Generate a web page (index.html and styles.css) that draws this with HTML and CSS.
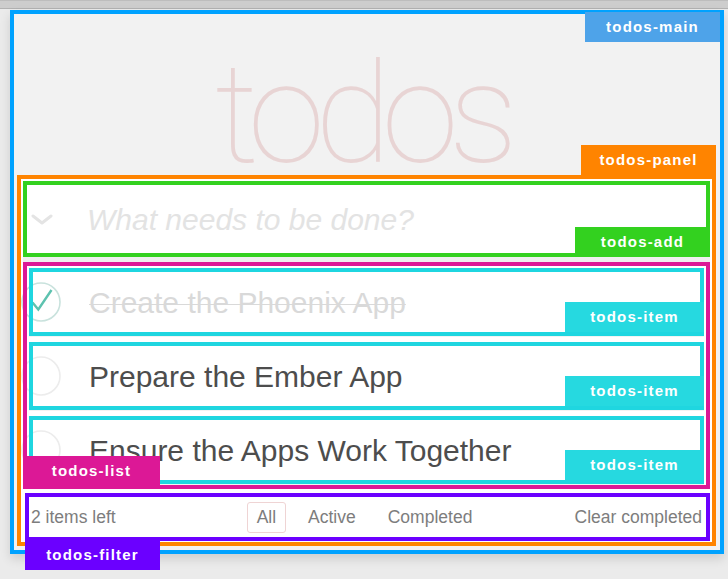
FILE: index.html
```html
<!DOCTYPE html>
<html lang="en">
<head>
<meta charset="utf-8">
<title>todos</title>
<link rel="stylesheet" href="styles.css">
</head>
<body>
<div class="topbar"></div>
<section class="main box">
  <span class="tag tag-main">todos-main</span>
  <header class="title"><h1>todos</h1></header>
  <div class="panel box">
    <span class="tag tag-panel">todos-panel</span>
    <div class="add box">
      <svg class="chev" width="22" height="12" viewBox="0 0 22 12"><polyline points="2,2 11,9 20,2" fill="none" stroke="#e4e4e4" stroke-width="3" stroke-linecap="round" stroke-linejoin="round"/></svg>
      <span class="placeholder">What needs to be done?</span>
      <span class="tag tag-add">todos-add</span>
    </div>
    <div class="divider"></div>
    <ul class="list box">
      <li class="item box done">
        <svg class="toggle" width="40" height="40" viewBox="0 0 40 40"><circle cx="20" cy="20" r="19" fill="none" stroke="#c9e2dd" stroke-width="1.6"/><polyline points="11.5,20.5 17.3,27.5 30.5,8" fill="none" stroke="#5dc2af" stroke-width="2.4"/></svg>
        <span class="label">Create the Phoenix App</span>
        <span class="tag tag-item">todos-item</span>
      </li>
      <li class="item box">
        <svg class="toggle" width="40" height="40" viewBox="0 0 40 40"><circle cx="20" cy="20" r="19" fill="none" stroke="#ececec" stroke-width="1.6"/></svg>
        <span class="label">Prepare the Ember App</span>
        <span class="tag tag-item">todos-item</span>
      </li>
      <li class="item box">
        <svg class="toggle" width="40" height="40" viewBox="0 0 40 40"><circle cx="20" cy="20" r="19" fill="none" stroke="#ececec" stroke-width="1.6"/></svg>
        <span class="label">Ensure the Apps Work Together</span>
        <span class="tag tag-item">todos-item</span>
      </li>
      <span class="tag tag-list">todos-list</span>
    </ul>
    <footer class="filter box">
      <span class="count">2 items left</span>
      <ul class="filters">
        <li><a class="selected">All</a></li>
        <li><a>Active</a></li>
        <li><a>Completed</a></li>
      </ul>
      <span class="clear">Clear completed</span>
      <span class="tag tag-filter">todos-filter</span>
    </footer>
  </div>
</section>
</body>
</html>
```
FILE: styles.css
```css
* { box-sizing: border-box; }
html, body { margin: 0; padding: 0; }
body {
  background: #ebebeb;
  font-family: "Liberation Sans", Arial, sans-serif;
  width: 728px;
  height: 579px;
  overflow: hidden;
}
.topbar {
  height: 9px;
  background: #cdcdcd;
  border-top: 1px solid #bdbdbd;
  border-bottom: 1px solid #b2b2b2;
}

.box { position: relative; padding: 4px; }
.box::after {
  content: "";
  position: absolute;
  inset: 0;
  border: 4px solid var(--bc);
  z-index: 2;
  pointer-events: none;
}

.main {
  --bc: #00a2ff;
  margin: 1px 0 0 10px;
  width: 714px;
  height: 544px;
  background: #f2f2f2;
  box-shadow: 0 5px 10px rgba(0,0,0,0.12);
  display: flex;
  flex-direction: column;
}
.title {
  height: 161px;
  display: flex;
  justify-content: center;
}
.title h1 {
  margin: 45px 0 0 -11px;
  height: 110px;
  font-family: Roboto, Inter, sans-serif;
  font-weight: 100;
  font-size: 140px;
  line-height: 110px;
  color: #e8d4d4;
  letter-spacing: -10px;
}

.panel {
  --bc: #ff8400;
  margin: 0 4px 0 3px;
  height: 371px;
  background: #fff;
  display: flex;
  flex-direction: column;
}

.add {
  --bc: #33d11f;
  margin: 2px 2px 0;
  height: 76px;
  display: flex;
  align-items: center;
}
.chev { margin-left: 4px; margin-top: 2px; }
.placeholder {
  margin-left: 34px;
  font-style: italic;
  font-size: 30px;
  color: #e3e3e3;
  margin-top: 1px;
}

.divider {
  height: 5px;
  margin: 0 2px;
  background: #efefef;
}

.list {
  --bc: #dc1896;
  margin: 0 2px;
  height: 227px;
  list-style: none;
  padding: 6px 6px 4px;
  display: flex;
  flex-direction: column;
  gap: 5px;
}
.item {
  --bc: #1fd6e0;
  height: 69px;
  flex: none;
  display: flex;
  align-items: center;
  border-bottom: 1px solid #f3f3f3;
}
.toggle {
  position: absolute;
  left: -8px;
  top: 14px;
  z-index: 1;
}
.label {
  margin-left: 56px;
  font-size: 30px;
  color: #4d4d4d;
  margin-top: 2px;
}
.done .label {
  color: #d9d9d9;
  text-decoration: line-through;
  text-decoration-thickness: 1px;
}

.filter {
  --bc: #6b00ff;
  margin: 4px 2px 0 4px;
  height: 48px;
  display: grid;
  grid-template-columns: 1fr auto 1fr;
  align-items: center;
  padding: 4px 8px 4px 6px;
  font-size: 17.5px;
  color: #7d7d7d;
}
.filters {
  list-style: none;
  margin: 0;
  padding: 0 4px 0 0;
  display: flex;
  gap: 12px;
}
.filters a {
  display: block;
  padding: 0 9px;
  line-height: 29px;
  border: 1px solid transparent;
  border-radius: 3px;
}
.filters a.selected { border-color: #efd4d4; }
.clear { justify-self: end; }

.tag {
  position: absolute;
  z-index: 3;
  height: 30px;
  line-height: 30px;
  text-align: center;
  color: #fff;
  font-family: "Liberation Sans", Arial, sans-serif;
  font-weight: bold;
  font-style: normal;
  font-size: 15px;
  letter-spacing: 1.2px;
}
.tag-main { background: #4ea3e9; width: 135px; right: 4px; top: 2px; }
.tag-panel { background: #ff8400; width: 135px; right: 0; top: -30px; }
.tag-add { background: #33d11f; width: 135px; right: 0; bottom: 0; }
.tag-item { background: #26d9e0; width: 139px; right: 0; bottom: 4px; }
.tag-list { background: #dc1896; width: 137px; left: 0; bottom: 3px; }
.tag-filter { background: #6b00ff; width: 135px; left: 0; top: 47px; }
```
